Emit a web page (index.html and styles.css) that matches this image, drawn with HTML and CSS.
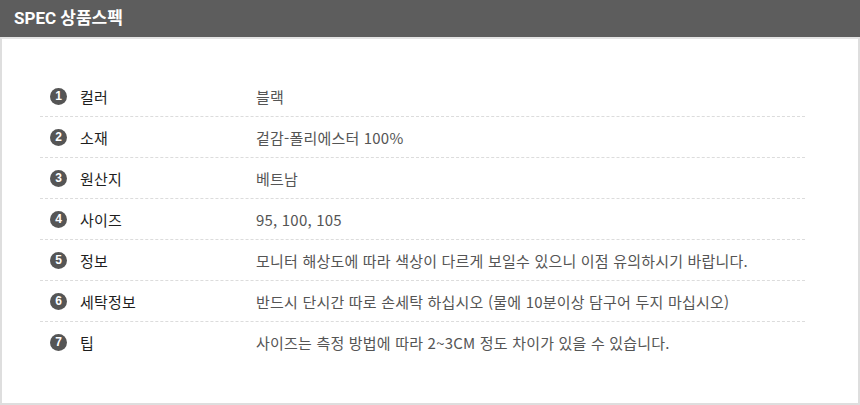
FILE: index.html
```html
<!DOCTYPE html>
<html lang="ko">
<head>
<meta charset="utf-8">
<link rel="stylesheet" href="styles.css">
</head>
<body>
<div class="spec">
  <div class="spec-head">SPEC 상품스펙</div>
  <div class="spec-body">
    <ul class="spec-list">
      <li class="row"><span class="key"><span class="num">1</span>컬러</span><span class="val">블랙</span></li>
      <li class="row"><span class="key"><span class="num">2</span>소재</span><span class="val">겉감-폴리에스터 100%</span></li>
      <li class="row"><span class="key"><span class="num">3</span>원산지</span><span class="val">베트남</span></li>
      <li class="row"><span class="key"><span class="num">4</span>사이즈</span><span class="val">95, 100, 105</span></li>
      <li class="row"><span class="key"><span class="num">5</span>정보</span><span class="val">모니터 해상도에 따라 색상이 다르게 보일수 있으니 이점 유의하시기 바랍니다.</span></li>
      <li class="row"><span class="key"><span class="num">6</span>세탁정보</span><span class="val">반드시 단시간 따로 손세탁 하십시오 (물에 10분이상 담구어 두지 마십시오)</span></li>
      <li class="row last"><span class="key"><span class="num">7</span>팁</span><span class="val">사이즈는 측정 방법에 따라 2~3CM 정도 차이가 있을 수 있습니다.</span></li>
    </ul>
  </div>
</div>
</body>
</html>
```
FILE: styles.css
```css
* { box-sizing: border-box; }
html, body { margin: 0; padding: 0; background: #fff; }
body { font-family: "Noto Sans CJK KR", "Liberation Sans", sans-serif; }
.spec { width: 860px; height: 405px; display: flex; flex-direction: column; }
.spec-head {
  height: 37px;
  background: #5d5d5d;
  color: #fff;
  font-family: "Roboto", "Noto Sans CJK KR", sans-serif;
  font-weight: 700;
  font-size: 17px;
  line-height: 37px;
  padding-left: 14px;
}
.spec-body {
  flex: 1;
  border: 2px solid #dedede;
  border-top: 2px solid #e4e4e4;
  padding: 37px 53px 0 38px;
}
.spec-list { list-style: none; margin: 0; padding: 0; }
.row {
  display: grid;
  grid-template-columns: 216px 1fr;
  align-items: center;
  height: 41px;
  border-bottom: 1px dashed #dcdcdc;
  font-size: 15px;
  letter-spacing: 0.2px;
}
.row.last { border-bottom: none; }
.key {
  display: flex;
  align-items: center;
  color: #1e1e1e;
  padding-left: 10px;
}
.num {
  width: 17px;
  height: 17px;
  border-radius: 50%;
  background: #555;
  color: #fff;
  font-family: "Liberation Sans", sans-serif;
  font-weight: 700;
  font-size: 12px;
  line-height: 17px;
  text-align: center;
  margin-right: 13px;
  letter-spacing: 0;
}
.val { color: #555; }
```
